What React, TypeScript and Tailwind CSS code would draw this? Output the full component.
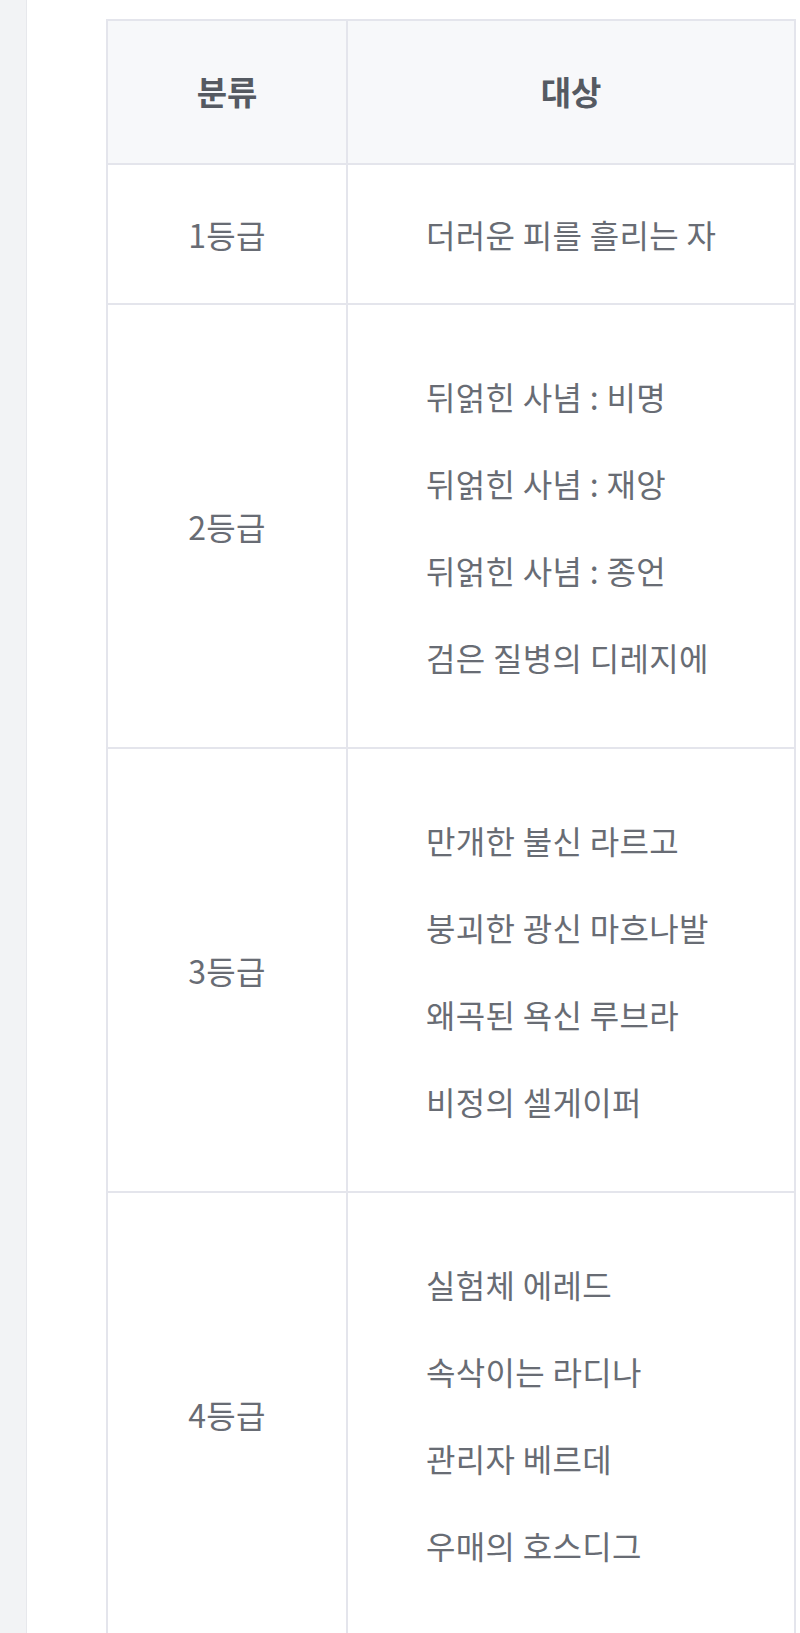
const font = "font-['Pretendard','Noto_Sans_CJK_KR','Noto_Sans',sans-serif]";

type Row = { grade: string; targets: string[] };

const rows: Row[] = [
  { grade: "1등급", targets: ["더러운 피를 흘리는 자"] },
  {
    grade: "2등급",
    targets: ["뒤얽힌 사념 : 비명", "뒤얽힌 사념 : 재앙", "뒤얽힌 사념 : 종언", "검은 질병의 디레지에"],
  },
  {
    grade: "3등급",
    targets: ["만개한 불신 라르고", "붕괴한 광신 마흐나발", "왜곡된 욕신 루브라", "비정의 셀게이퍼"],
  },
  {
    grade: "4등급",
    targets: ["실험체 에레드", "속삭이는 라디나", "관리자 베르데", "우매의 호스디그"],
  },
];

const App = () => {
  return (
    <div className={`flex min-h-screen bg-white ${font}`}>
      <div className="w-[27px] shrink-0 border-r border-[#e7e8ec] bg-[#f2f3f5]" />

      <div className="flex-1 pt-[19px] pl-[79px] pr-[4px]">
        <div className="grid grid-cols-[240px_1fr] border-t-2 border-l-2 border-[#e4e5ec] text-[32px] tracking-[0.01em] text-[#686c74]">
          <div className="flex h-[144px] items-center justify-center border-r-2 border-b-2 border-[#e4e5ec] bg-[#f7f8fa] text-[33px] font-bold tracking-normal text-[#555a62]">
            분류
          </div>
          <div className="flex h-[144px] items-center justify-center border-r-2 border-b-2 border-[#e4e5ec] bg-[#f7f8fa] text-[33px] font-bold tracking-normal text-[#555a62]">
            대상
          </div>

          {rows.map((row) => (
            <div key={row.grade} className="contents">
              <div
                className={`flex items-center justify-center border-r-2 border-b-2 border-[#e4e5ec] ${
                  row.targets.length > 1 ? "h-[444px]" : "h-[140px]"
                }`}
              >
                {row.grade}
              </div>
              <div
                className={`flex flex-col justify-center gap-[43px] border-r-2 border-b-2 border-[#e4e5ec] pl-[78px] ${
                  row.targets.length > 1 ? "h-[444px]" : "h-[140px]"
                }`}
              >
                {row.targets.map((t) => (
                  <p key={t} className="leading-[44px]">
                    {t}
                  </p>
                ))}
              </div>
            </div>
          ))}
        </div>
      </div>
    </div>
  );
};

export default App;
